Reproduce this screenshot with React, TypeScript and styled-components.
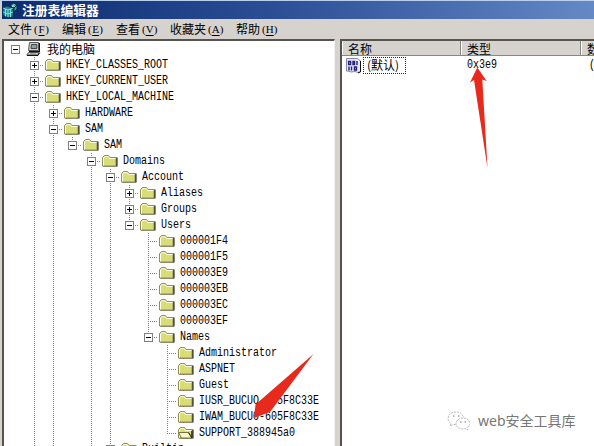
import React from "react";
import styled, { createGlobalStyle, css } from "styled-components";

const Global = createGlobalStyle`
  html, body { margin: 0; padding: 0; overflow: hidden; background: #d6d3ce; }
  * { box-sizing: border-box; }
`;

const cjk = `"Noto Sans CJK SC", sans-serif`;

const Window = styled.div`
  position: relative;
  width: 594px;
  height: 446px;
  overflow: hidden;
  display: flex;
  flex-direction: column;
  background: #d6d3ce;
  color: #000;
  font: 12px/16px "Liberation Sans", ${cjk};
  border-top: 1px solid #b9cfee;
`;

const TitleBar = styled.div`
  flex: none;
  height: 18px;
  margin-left: 2px;
  display: flex;
  align-items: center;
  gap: 4px;
  background: linear-gradient(90deg, #0c2c70 0%, #2a4d94 45%, #6389c6 100%);
`;

const Title = styled.span`
  color: #fff;
  font: bold 12.8px/18px ${cjk};
`;

const MenuBar = styled.div`
  flex: none;
  height: 20px;
  padding-left: 8px;
  display: flex;
  gap: 12px;
`;

const MenuItem = styled.span`
  display: flex;
  height: 20px;
  line-height: 20px;
  font-family: ${cjk};
`;

const Hotkey = styled.span`
  width: 18px;
  display: flex;
  justify-content: space-between;
  padding: 0 1px 0 2px;
  white-space: pre;
  font: 11px/20px "Liberation Serif", serif;
  u { text-underline-offset: 2px; }
`;

const Panes = styled.div`
  flex: 1;
  min-height: 0;
  display: flex;
  gap: 5px;
  padding-left: 2px;
`;

const Pane = styled.div<{ $width?: number }>`
  ${(p) => (p.$width ? css`width: ${p.$width}px; border-right: 1px solid #f4f3f0;` : css`flex: 1;`)}
  min-width: 0;
  overflow: hidden;
  background: #fff;
  border-top: 2px solid #55534f;
  border-left: 2px solid #55534f;
`;

const TreeRow = styled.div`
  display: flex;
  height: 16px;
  padding-left: 2px;
`;

type CellKind = "blank" | "line" | "tee" | "end";

const dotsY = "repeating-linear-gradient(180deg, #808080 0 1px, transparent 1px 2px)";
const dotsX = "repeating-linear-gradient(90deg, #808080 0 1px, transparent 1px 2px)";

const Guide = styled.span<{ $kind: CellKind }>`
  flex: none;
  width: 19px;
  height: 16px;
  display: flex;
  align-items: flex-start;
  padding: 4px 0 0 5px;
  background-repeat: no-repeat;
  ${(p) =>
    p.$kind !== "blank" &&
    css`
      background-image: ${dotsY}${p.$kind === "line" ? "" : `, ${dotsX}`};
      background-size: 1px ${p.$kind === "end" ? 8 : 16}px, 10px 1px;
      background-position: 9px 0, 9px 8px;
    `}
`;

const IconSlot = styled.span`
  flex: none;
  width: 22px;
  height: 16px;
  display: flex;
  padding-left: 1px;
`;

const RootLabel = styled.span`
  font: 12px/16px ${cjk};
`;

const KeyLabel = styled.span`
  font: 12px/16px "Liberation Mono", monospace;
  white-space: pre;
  transform: scaleX(0.8333);
  transform-origin: 0 50%;
`;

const HeaderRow = styled.div`
  display: flex;
  height: 15px;
  background: #d6d3ce;
  border-bottom: 1px solid #8a8781;
`;

const HeaderCell = styled.span<{ $width: number }>`
  flex: none;
  width: ${(p) => p.$width}px;
  padding-left: 5px;
  font: 12px/15px ${cjk};
  border-right: 1px solid #8a8781;
  border-left: 1px solid #fff;
`;

const ValueRow = styled.div`
  display: flex;
  height: 18px;
`;

const ValueCell = styled.span<{ $width: number }>`
  flex: none;
  display: flex;
  align-items: center;
  width: ${(p) => p.$width}px;
  padding-left: 4px;
`;

const FocusedName = styled.span`
  width: 43px;
  height: 17px;
  margin-left: 1px;
  border: 1px dotted #222;
  padding-left: 3px;
  font: 12px/14px ${cjk};
  white-space: nowrap;
`;

const Overlay = styled.svg`
  position: absolute;
  left: 0;
  top: -1px;
  pointer-events: none;
`;

const Watermark = styled.div`
  position: absolute;
  left: 446px;
  top: 409px;
  display: flex;
  align-items: center;
  gap: 6px;
  color: #777;
  font: 14px/22px "Noto Sans", ${cjk};
  white-space: nowrap;
`;

const Toggle = ({ open }: { open: boolean }) => (
  <svg width="9" height="9" shapeRendering="crispEdges">
    <path fill="#fff" stroke="#808080" d="M.5 .5h8v8h-8z" />
    <path fill="#000" d={open ? "M2 4h5v1h-5z" : "M2 4h5v1h-5zM4 2h1v5h-1z"} />
  </svg>
);

const Folder = ({ open }: { open?: boolean }) => (
  <svg width="16" height="16" viewBox="0 0 16 16">
    <path fill="#111" d="M1 13.500h14.500V4.500H14V13H1z" />
    <path fill="#d9dd78" stroke="#8f8f55" d="M.5 13V4.500L2.500 2.500H6.500L8 4.500H14V13Z" />
    <path stroke="#fffde0" fill="none" d="M1.500 12.500V5L3 3.500H6L7.500 5.500H13.500" />
    {open && (
      <>
        <path fill="#f8f6c8" stroke="#77773f" d="M.5 7.500H10.500L14 13H3.500z" />
        <path stroke="#222" fill="none" d="M10.500 7.500L13.800 13V6" />
      </>
    )}
  </svg>
);

const Computer = () => (
  <svg width="17" height="16" viewBox="0 0 17 16">
    <path fill="#d0d0c8" stroke="#555" d="M3.500 1.500H12.500V9.500H2.500z" />
    <path fill="#84a3a0" stroke="#444" d="M5.500 3.500H10.800V7.500H5z" />
    <path fill="#111" d="M13 2h1v8h-1zM3 10h11v1H3z" />
    <path fill="#d7d5c8" stroke="#555" d="M2.500 11.500H13L11.500 14H.8z" />
    <path stroke="#111" d="M1 14.500H12L13.800 11.500" fill="none" />
    <path stroke="#888" d="M4 12.800h6" />
  </svg>
);

const RegeditIcon = () => (
  <svg width="16" height="16" viewBox="0 0 16 16">
    <path fill="#1e8b94" stroke="#082b3b" strokeWidth=".6" d="M1 6L5 4 10 6 11 8 11 15 6 15.500 1 13.500z" />
    <path fill="none" stroke="#8ce5e2" strokeWidth=".9" d="M1 6L6 8 11 6M6 8V15M3.500 7V14.500M8.500 7V15M1 10L6 12 11 10" />
    <path fill="#3e9da4" stroke="#071d30" strokeWidth=".8" d="M8 4L11.500 1 15 3 12 6zM12 6L15 3V7L12 10z" />
    <path stroke="#a5efe9" strokeWidth=".8" d="M10 3.500L13 4.800M12.500 2L10 5" />
  </svg>
);

const BinaryIcon = () => (
  <svg width="16" height="17" viewBox="0 0 16 17">
    <path fill="#e8e8f6" stroke="#8585a8" d="M.5 1.500H11.500L14.500 4V14.500L12 15.500 9 14.500 5 15 2 14 .5 14z" />
    <path stroke="#111" d="M14.500 4V15L12 16" fill="none" />
    <path fill="none" stroke="#20207c" strokeWidth="1.400" d="M2.600 4.500h2v3h-2zM7 4.500h1.500v3H7zM11 4v4M3 9.500v4M5.500 9.500v4M8.500 10h2v3h-2z" />
  </svg>
);

const WechatIcon = () => (
  <svg width="26" height="22" viewBox="0 0 26 22">
    <g fill="#fff" stroke="#aaa" strokeWidth=".8" strokeDasharray="2 1">
      <path d="M10 2C5 2 2 5 2 8.500c0 2 1 3.500 3 5L4 16l3.500-1.500c6 1 10-2 10-6S14 2 10 2z" />
      <path d="M17 8c-4 0-7 2.500-7 5.500s3 5.500 7 5.500l2-.3 3 1.300-.8-2.300c5-4 1.800-9.700-4.200-9.700z" />
    </g>
    <path stroke="#777" d="M7 6h1.500M12 6h1.500M14 12h1.500M18.500 12H20" />
  </svg>
);

interface TreeKey {
  name: string;
  guides: string;
  toggle?: "open" | "closed";
  openFolder?: boolean;
}

// Guide letters, one per indent column: b = blank, l = line, t = tee, e = last child.
const kinds: Record<string, CellKind> = { b: "blank", l: "line", t: "tee", e: "end" };

const keys: TreeKey[] = [
  { name: "HKEY_CLASSES_ROOT", guides: "bt", toggle: "closed" },
  { name: "HKEY_CURRENT_USER", guides: "bt", toggle: "closed" },
  { name: "HKEY_LOCAL_MACHINE", guides: "bt", toggle: "open" },
  { name: "HARDWARE", guides: "blt", toggle: "closed" },
  { name: "SAM", guides: "blt", toggle: "open" },
  { name: "SAM", guides: "blle", toggle: "open" },
  { name: "Domains", guides: "bllbt", toggle: "open" },
  { name: "Account", guides: "bllblt", toggle: "open" },
  { name: "Aliases", guides: "bllbllt", toggle: "closed" },
  { name: "Groups", guides: "bllbllt", toggle: "closed" },
  { name: "Users", guides: "bllblle", toggle: "open" },
  ...["000001F4", "000001F5", "000003E9", "000003EB", "000003EC", "000003EF"].map((name) => ({
    name,
    guides: "bllbllbt",
  })),
  { name: "Names", guides: "bllbllbe", toggle: "open" },
  ...["Administrator", "ASPNET", "Guest", "IUSR_BUCUO-605F8C33E", "IWAM_BUCUO-605F8C33E"].map((name) => ({
    name,
    guides: "bllbllbbt",
  })),
  { name: "SUPPORT_388945a0", guides: "bllbllbbe", openFolder: true },
  { name: "Builtin", guides: "bllblt", toggle: "closed" },
];

const menus = [
  ["文件", "F"],
  ["编辑", "E"],
  ["查看", "V"],
  ["收藏夹", "A"],
  ["帮助", "H"],
];

export default function App() {
  return (
    <Window>
      <Global />
      <TitleBar>
        <RegeditIcon />
        <Title>注册表编辑器</Title>
      </TitleBar>
      <MenuBar>
        {menus.map(([label, key]) => (
          <MenuItem key={key}>
            {label}
            <Hotkey>
              <span>(</span>
              <u>{key}</u>
              <span>)</span>
            </Hotkey>
          </MenuItem>
        ))}
      </MenuBar>
      <Panes>
        <Pane $width={333}>
          <TreeRow>
            <Guide $kind="blank">
              <Toggle open />
            </Guide>
            <IconSlot>
              <Computer />
            </IconSlot>
            <RootLabel>我的电脑</RootLabel>
          </TreeRow>
          {keys.map((item, row) => (
            <TreeRow key={row}>
              {item.guides.split("").map((letter, column) => (
                <Guide key={column} $kind={kinds[letter]}>
                  {column === item.guides.length - 1 && item.toggle && <Toggle open={item.toggle === "open"} />}
                </Guide>
              ))}
              <IconSlot>
                <Folder open={item.openFolder} />
              </IconSlot>
              <KeyLabel>{item.name}</KeyLabel>
            </TreeRow>
          ))}
        </Pane>
        <Pane>
          <HeaderRow>
            <HeaderCell $width={119}>名称</HeaderCell>
            <HeaderCell $width={120}>类型</HeaderCell>
            <HeaderCell $width={120}>数据</HeaderCell>
          </HeaderRow>
          <ValueRow>
            <ValueCell $width={121}>
              <BinaryIcon />
              <FocusedName>(默认)</FocusedName>
            </ValueCell>
            <ValueCell $width={122}>
              <KeyLabel>0x3e9</KeyLabel>
            </ValueCell>
            <ValueCell $width={100}>
              <KeyLabel>(</KeyLabel>
            </ValueCell>
          </ValueRow>
        </Pane>
      </Panes>
      <Overlay width="594" height="446" fill="#e82a1c">
        <path d="M477.300 67.500L486.700 81 482.300 79.500 487.500 168 474 80 470 82.500z" />
        <path d="M313.500 354L270 412 254 418 255.500 404.500z" />
      </Overlay>
      <Watermark>
        <WechatIcon />
        web安全工具库
      </Watermark>
    </Window>
  );
}
